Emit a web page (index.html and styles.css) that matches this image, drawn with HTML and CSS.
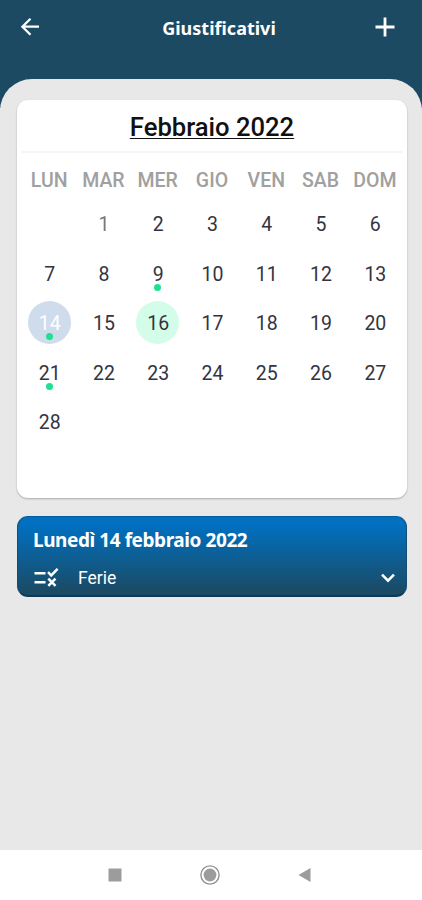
FILE: index.html
```html
<!DOCTYPE html>
<html lang="it">
<head>
<meta charset="utf-8">
<meta name="viewport" content="width=device-width, initial-scale=1">
<title>Giustificativi</title>
<link rel="stylesheet" href="styles.css">
</head>
<body>
<div class="app">
  <header class="bar">
    <svg class="back" width="20" height="20" viewBox="0 0 20 20"><path d="M10.5 1.7 2.4 9.7l8.1 8M2.4 9.7H19"/></svg>
    <h1>Giustificativi</h1>
    <svg class="add" width="20" height="20" viewBox="0 0 20 20"><path d="M10 .5v19M.5 10h19"/></svg>
  </header>
  <main class="sheet">
    <section class="calendar">
      <h2><span>Febbraio 2022</span></h2>
      <div class="grid weekdays">
        <span>LUN</span><span>MAR</span><span>MER</span><span>GIO</span><span>VEN</span><span>SAB</span><span>DOM</span>
      </div>
      <div class="grid days">
        <span></span><span class="soft">1</span><span>2</span><span>3</span><span>4</span><span>5</span><span>6</span>
        <span>7</span><span>8</span><span class="event">9</span><span>10</span><span>11</span><span>12</span><span>13</span>
        <span class="event selected">14</span><span>15</span><span class="today">16</span><span>17</span><span>18</span><span>19</span><span>20</span>
        <span class="event">21</span><span>22</span><span>23</span><span>24</span><span>25</span><span>26</span><span>27</span>
        <span>28</span>
      </div>
    </section>
    <section class="detail">
      <h3>Lunedì 14 febbraio 2022</h3>
      <div class="entry">
        <svg class="rule" width="25" height="20" viewBox="0 0 25 20"><path d="M.5 5.2h11M.5 14.2h11M14 4.2l3.2 3.2 6.4-6.5M14.3 10.7l7.2 7.2M21.5 10.7l-7.2 7.2"/></svg>
        <span>Ferie</span>
        <svg class="chevron" width="14" height="10" viewBox="0 0 14 10"><path d="m1 1.6 6 6 6-6"/></svg>
      </div>
    </section>
  </main>
  <nav class="system">
    <svg width="14" height="14" viewBox="0 0 14 14"><path d="M.5.5h13v13H.5z"/></svg>
    <svg width="20" height="20" viewBox="0 0 20 20"><circle class="ring" cx="10" cy="10" r="9.1"/><circle cx="10" cy="10" r="6.4"/></svg>
    <svg width="13" height="14" viewBox="0 0 13 14"><path d="M12.5 0v14L.5 7z"/></svg>
  </nav>
</div>
</body>
</html>
```
FILE: styles.css
```css
* { box-sizing: border-box; }
body { margin: 0; font-family: Roboto, sans-serif; }
h1, h2, h3 { margin: 0; }
svg { display: block; flex: none; fill: none; stroke: #fff; }
.app {
  height: 900px;
  display: flex;
  flex-direction: column;
  background: linear-gradient(#1c4a63 108px, #e8e8e8 108px);
}
.bar {
  height: 79px;
  padding: 0 27px 25px 20px;
  display: flex;
  align-items: center;
  justify-content: space-between;
}
.back { stroke-width: 2.3; }
.add { stroke-width: 2.8; }
.bar h1 {
  margin-left: 23px;
  margin-top: 1px;
  color: #fff;
  font: 700 18px/24px "Noto Sans", sans-serif;
  letter-spacing: 0;
}
.sheet {
  flex: 1;
  padding: 21px 15px 0 17px;
  background: #e8e8e8;
  border-radius: 32px 32px 0 0;
}
.calendar {
  height: 398px;
  padding: 0 5px;
  background: #fff;
  border-radius: 11px;
  box-shadow: 0 1px 2px #0004;
}
.calendar h2 {
  height: 53px;
  padding-top: 1px;
  border-bottom: 2px solid #f5f5f5;
  text-align: center;
  color: #111;
  font-size: 25.6px;
  font-weight: 500;
  line-height: 52px;
}
.calendar h2 span {
  display: inline-block;
  height: 30px;
  line-height: 30px;
  text-decoration: underline;
  text-decoration-thickness: 1px;
  text-underline-offset: 2px;
}
.grid {
  display: grid;
  grid-template-columns: repeat(7, 1fr);
  justify-items: center;
}
.weekdays {
  height: 46px;
  align-items: center;
  padding-top: 9px;
  color: #a0a0a0;
  font-size: 19.5px;
  font-weight: 500;
}
.days {
  grid-auto-rows: 49.5px;
  align-items: center;
  color: #34343f;
  font-size: 19.5px;
}
.days span {
  position: relative;
  width: 43px;
  height: 43px;
  border-radius: 50%;
  line-height: 46px;
  text-align: center;
  text-indent: 1px;
}
.days .soft { color: #777; }
.days .selected { background: #cfdcec; color: #fff; }
.days .today { background: #d3fde9; }
.event::after {
  content: "";
  position: absolute;
  left: 18px;
  bottom: 4px;
  width: 7px;
  height: 7px;
  border-radius: 50%;
  background: #1de191;
}
.detail {
  height: 81px;
  margin-top: 18px;
  padding: 10px 11px 0 16px;
  background: linear-gradient(#0170c0 10%, #1a4b65 95%);
  border: solid;
  border-width: 1px 1px 2px;
  border-color: #075b9b #164d76 #0b395c;
  border-radius: 11px;
  color: #fff;
}
.detail h3 {
  margin-left: -1px;
  font: 700 19px/26px "Noto Sans", sans-serif;
  letter-spacing: -0.43px;
}
.entry {
  display: flex;
  align-items: center;
  height: 26px;
  margin-top: 12px;
  font-size: 17.5px;
}
.rule { stroke-width: 2.5; margin-right: 19px; }
.chevron { margin-left: auto; stroke-width: 2.6; }
.system {
  height: 50px;
  padding: 0 111px 0 108px;
  display: flex;
  align-items: center;
  justify-content: space-between;
  background: #fff;
}
.system svg { fill: #9c9c9c; stroke: none; }
.system .ring { fill: none; stroke: #929292; stroke-width: 1.4; }
```
